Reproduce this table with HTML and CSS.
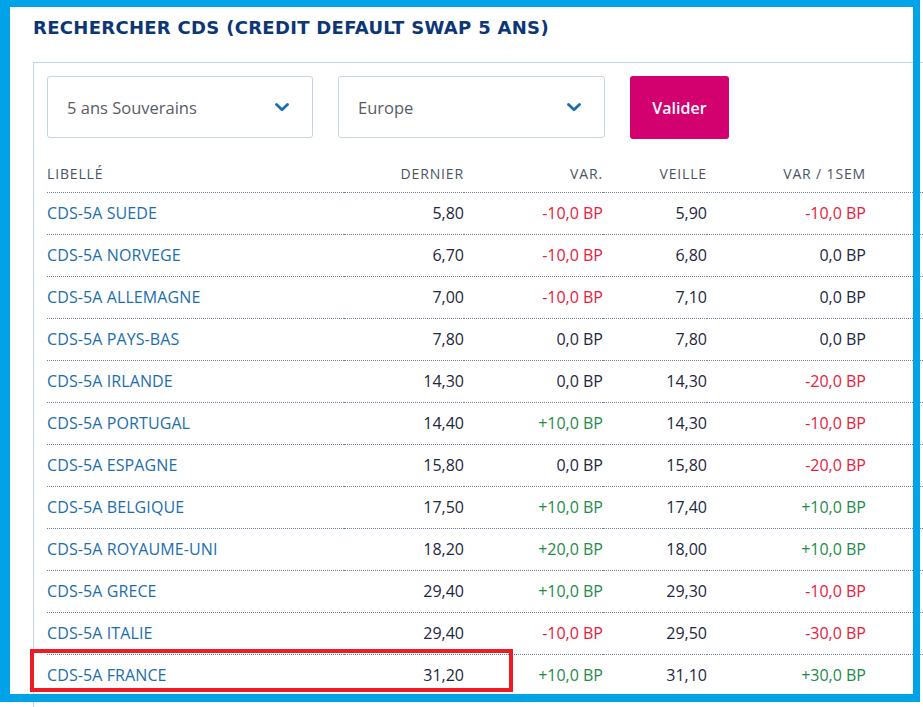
FILE: index.html
```html
<!DOCTYPE html>
<html lang="fr">
<head>
<meta charset="utf-8">
<title>Rechercher CDS</title>
<link rel="stylesheet" href="styles.css">
</head>
<body>
<div class="page">
  <h1 class="title">RECHERCHER CDS (CREDIT DEFAULT SWAP 5 ANS)</h1>
  <div class="card">
    <div class="filters">
      <div class="select select-1">
        <span>5 ans Souverains</span>
        <svg class="chev" width="14" height="9" viewBox="0 0 14 9"><path d="M1.5 1.5 L7 6.8 L12.5 1.5" fill="none" stroke="#1a6fb0" stroke-width="2.8" stroke-linecap="round" stroke-linejoin="round"/></svg>
      </div>
      <div class="select select-2">
        <span>Europe</span>
        <svg class="chev" width="14" height="9" viewBox="0 0 14 9"><path d="M1.5 1.5 L7 6.8 L12.5 1.5" fill="none" stroke="#1a6fb0" stroke-width="2.8" stroke-linecap="round" stroke-linejoin="round"/></svg>
      </div>
      <button class="btn">Valider</button>
    </div>
    <table class="cds">
      <colgroup>
        <col class="c-name"><col class="c-last"><col class="c-var"><col class="c-prev"><col class="c-week"><col>
      </colgroup>
      <thead>
        <tr><th class="l">LIBELLÉ</th><th>DERNIER</th><th>VAR.</th><th>VEILLE</th><th>VAR / 1SEM</th><th></th></tr>
      </thead>
      <tbody>
        <tr><td class="l">CDS-5A SUEDE</td><td>5,80</td><td class="neg">-10,0 BP</td><td>5,90</td><td class="neg">-10,0 BP</td><td></td></tr>
        <tr><td class="l">CDS-5A NORVEGE</td><td>6,70</td><td class="neg">-10,0 BP</td><td>6,80</td><td>0,0 BP</td><td></td></tr>
        <tr><td class="l">CDS-5A ALLEMAGNE</td><td>7,00</td><td class="neg">-10,0 BP</td><td>7,10</td><td>0,0 BP</td><td></td></tr>
        <tr><td class="l">CDS-5A PAYS-BAS</td><td>7,80</td><td>0,0 BP</td><td>7,80</td><td>0,0 BP</td><td></td></tr>
        <tr><td class="l">CDS-5A IRLANDE</td><td>14,30</td><td>0,0 BP</td><td>14,30</td><td class="neg">-20,0 BP</td><td></td></tr>
        <tr><td class="l">CDS-5A PORTUGAL</td><td>14,40</td><td class="pos">+10,0 BP</td><td>14,30</td><td class="neg">-10,0 BP</td><td></td></tr>
        <tr><td class="l">CDS-5A ESPAGNE</td><td>15,80</td><td>0,0 BP</td><td>15,80</td><td class="neg">-20,0 BP</td><td></td></tr>
        <tr><td class="l">CDS-5A BELGIQUE</td><td>17,50</td><td class="pos">+10,0 BP</td><td>17,40</td><td class="pos">+10,0 BP</td><td></td></tr>
        <tr><td class="l">CDS-5A ROYAUME-UNI</td><td>18,20</td><td class="pos">+20,0 BP</td><td>18,00</td><td class="pos">+10,0 BP</td><td></td></tr>
        <tr><td class="l">CDS-5A GRECE</td><td>29,40</td><td class="pos">+10,0 BP</td><td>29,30</td><td class="neg">-10,0 BP</td><td></td></tr>
        <tr><td class="l">CDS-5A ITALIE</td><td>29,40</td><td class="neg">-10,0 BP</td><td>29,50</td><td class="neg">-30,0 BP</td><td></td></tr>
        <tr><td class="l">CDS-5A FRANCE</td><td>31,20</td><td class="pos">+10,0 BP</td><td>31,10</td><td class="pos">+30,0 BP</td><td></td></tr>
      </tbody>
    </table>
  </div>
  <div class="mark-row"></div>
  <div class="frame"></div>
</div>
</body>
</html>
```

FILE: styles.css
```css
html, body {
  margin: 0;
  padding: 0;
  background: #ffffff;
  overflow: hidden;
}
body {
  font-family: "Open Sans", "Liberation Sans", sans-serif;
  width: 923px;
  height: 707px;
}
.page {
  position: relative;
  width: 923px;
  height: 707px;
  overflow: hidden;
  padding-top: 16px;
  box-sizing: border-box;
}
.title {
  margin: 0 0 22px 33px;
  font-family: "DejaVu Sans", "Open Sans", sans-serif;
  font-size: 18px;
  line-height: 24px;
  font-weight: 700;
  color: #0c3675;
  letter-spacing: 0.3px;
  white-space: nowrap;
}
.card {
  margin-left: 33px;
  border-top: 1px solid #c6d4e3;
  border-left: 1px solid #c6d4e3;
  padding: 13px 0 0 13px;
  height: 700px;
}
.filters {
  display: flex;
  align-items: stretch;
  height: 63px;
}
.select {
  box-sizing: border-box;
  height: 62px;
  border: 1px solid #c6d4e3;
  border-radius: 3px;
  display: flex;
  align-items: center;
  justify-content: space-between;
  padding: 0 23px 0 19px;
  font-size: 16.5px;
  color: #575d66;
}
.select-1 { width: 266px; margin-right: 25px; }
.select-2 { width: 267px; margin-right: 25px; }
.chev { display: block; margin-top: 1px; }
.btn {
  width: 99px;
  height: 63px;
  border: none;
  border-radius: 3px;
  background: #d3006f;
  color: #ffffff;
  font-family: "Open Sans", "Liberation Sans", sans-serif;
  font-size: 16px;
  font-weight: 600;
  padding: 0;
}
.cds {
  border-collapse: collapse;
  table-layout: fixed;
  width: 876px;
}
.c-name { width: 297px; }
.c-last { width: 120px; }
.c-var { width: 139px; }
.c-prev { width: 104px; }
.c-week { width: 159px; }
.cds th {
  font-size: 14px;
  font-weight: 400;
  color: #4a5463;
  letter-spacing: 0.85px;
  text-align: right;
  padding: 0 0 10px 0;
  height: 53px;
  line-height: 16px;
  vertical-align: bottom;
  box-sizing: border-box;
}
.cds td {
  border-top: 1px dotted #6f849c;
  height: 41px;
  padding: 0;
  text-align: right;
  font-size: 16px;
  color: #1d2740;
  vertical-align: middle;
  white-space: nowrap;
}
.cds .l { text-align: left; }
.cds td.l { color: #1b6eae; letter-spacing: 0.1px; }
.cds td.neg { color: #e8203d; }
.cds td.pos { color: #1f8a4a; }
.mark-row {
  position: absolute;
  left: 30px;
  top: 649px;
  width: 483px;
  height: 43px;
  box-sizing: border-box;
  border: 4px solid #ed1c24;
  pointer-events: none;
}
.frame {
  position: absolute;
  left: 0;
  top: 0;
  width: 920px;
  height: 702px;
  box-sizing: border-box;
  border-style: solid;
  border-color: #00a2e8;
  border-width: 7px 7px 8px 10px;
  pointer-events: none;
}
```
